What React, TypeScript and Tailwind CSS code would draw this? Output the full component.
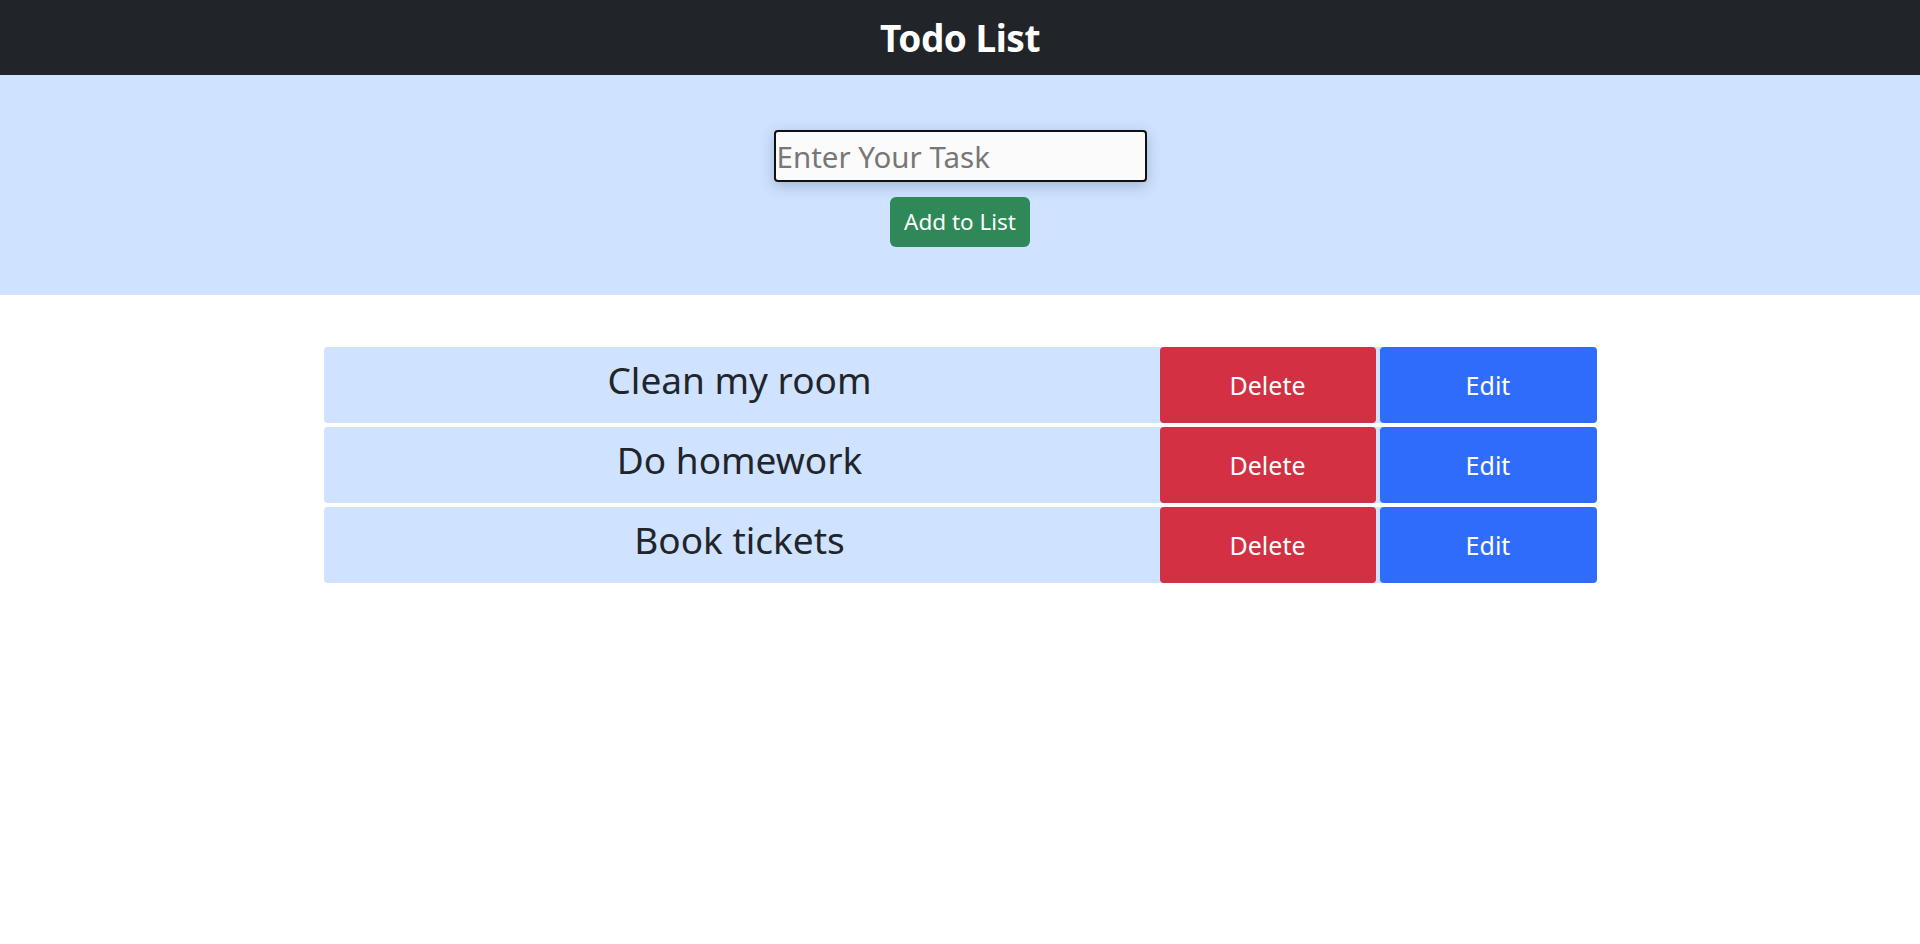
import { useState } from "react";

const font = { fontFamily: '"Noto Sans", "Open Sans", sans-serif' };

export default function App() {
  const [task, setTask] = useState("");
  const [todos, setTodos] = useState<string[]>(["Clean my room", "Do homework", "Book tickets"]);

  const addTodo = () => {
    if (!task.trim()) return;
    setTodos([...todos, task.trim()]);
    setTask("");
  };

  return (
    <div className="min-h-screen bg-white font-['Noto_Sans',sans-serif]" style={font}>
      {/* Header */}
      <header className="h-[75px] bg-[#212529] flex items-center justify-center">
        <h1 className="text-white text-[37px] font-bold leading-none tracking-[-0.5px]">Todo List</h1>
      </header>

      {/* Input area */}
      <section className="h-[220px] bg-[#cfe2ff] flex flex-col items-center pt-[55px]">
        <input
          value={task}
          onChange={(e) => setTask(e.target.value)}
          placeholder="Enter Your Task"
          className="w-[373px] h-[52px] bg-[#fbfbfb] border-2 border-[#111] rounded-[4px] px-[1px] text-[29.5px] text-[#212529] placeholder:text-[#777] shadow-[0_4px_14px_rgba(60,80,120,0.3)] outline-none"
        />
        <button
          onClick={addTodo}
          className="mt-[15px] w-[140px] h-[50px] bg-[#2e8857] text-white text-[22.5px] rounded-[6px] flex items-center justify-center"
        >
          Add to List
        </button>
      </section>

      {/* List */}
      <ul className="w-[1273px] mx-auto mt-[52px] flex flex-col gap-[4px]">
        {todos.map((t, i) => (
          <li key={i} className="h-[76px] bg-[#cfe2ff] rounded-[4px] flex">
            <div className="flex-1 text-center text-[37px] text-[#212529] pt-[5px] pr-[4px] leading-[1.5]">{t}</div>
            <button
              onClick={() => setTodos(todos.filter((_, j) => j !== i))}
              className="w-[216px] h-full bg-[#d33043] text-white text-[25px] rounded-[4px] pt-[2px]"
            >
              Delete
            </button>
            <button className="ml-[4px] w-[217px] h-full bg-[#306cfb] text-white text-[25px] rounded-[4px] pt-[2px]">
              Edit
            </button>
          </li>
        ))}
      </ul>
    </div>
  );
}
